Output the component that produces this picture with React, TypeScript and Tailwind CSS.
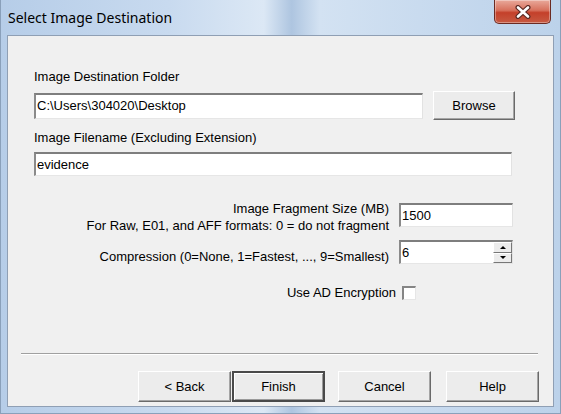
const ui = '"Liberation Sans", Arial, sans-serif'

function Field({ value, className = '' }: { value?: string; className?: string }) {
  return (
    <div
      className={`bg-white border-t-2 border-l-2 border-b border-r border-t-[#7e7e7e] border-l-[#8a8a8a] border-b-[#e6e6e6] border-r-[#e2e2e2] pl-[1px] flex items-center text-[13px] leading-[16px] text-black ${className}`}
    >
      {value}
    </div>
  )
}

function Button({ label, primary = false, className = '' }: { label: string; primary?: boolean; className?: string }) {
  return (
    <div
      className={`h-[31px] w-[93px] flex items-center justify-center text-[13px] text-black bg-[#ececec] ${
        primary
          ? 'border-2 border-[#4a4a4a] shadow-[inset_1px_1px_0_#ffffff,inset_-1px_-1px_0_#9a9a9a]'
          : 'border border-t-white border-l-white border-b-[#6a6a6a] border-r-[#6a6a6a] shadow-[inset_-1px_-1px_0_#a5a5a5]'
      } ${className}`}
    >
      {label}
    </div>
  )
}

export default function App() {
  return (
    <div
      className="w-[561px] h-[414px] flex flex-col overflow-hidden border-l border-r border-b border-[#8aa0ba] bg-[linear-gradient(90deg,#b6cde8_0%,#c8daef_30%,#dce8f5_47%,#aec5e0_52%,#d3e2f2_57%,#c6d9ee_80%,#bcd2ea_100%)]"
      style={{ fontFamily: ui }}
    >
      {/* Title bar */}
      <div className="h-[35px] shrink-0 flex items-start justify-between pl-[7px] pr-[9px]">
        <div
          className="pt-[8px] text-[14px] leading-[20px] text-black"
          style={{ fontFamily: '"Noto Sans", "Open Sans", sans-serif' }}
        >
          Select Image Destination
        </div>
        <div className="w-[57px] h-[24px] rounded-b-[5px] border border-t-0 border-[#6b2a22] bg-[linear-gradient(180deg,#e9a99b_0%,#d7705c_45%,#c4402a_55%,#c75a42_100%)] shadow-[inset_0_0_0_1px_rgba(255,255,255,0.35)] flex items-center justify-center">
          <svg width="18" height="14" viewBox="0 0 18 14">
            <path d="M4 2.5 L14 11.5 M14 2.5 L4 11.5" stroke="#5b2a24" strokeWidth="5" strokeLinecap="round" />
            <path d="M4 2.5 L14 11.5 M14 2.5 L4 11.5" stroke="#ffffff" strokeWidth="2.6" strokeLinecap="round" />
          </svg>
        </div>
      </div>

      {/* Client area */}
      <div className="mx-[6px] h-[372px] shrink-0 bg-[#f0f0f0] border border-[#8f9fb4] flex flex-col text-black">
        <div className="pl-[26px] mt-[33px] text-[13px] leading-[16px]">Image Destination Folder</div>
        <div className="pl-[26px] mt-[6px] h-[29px] flex items-center">
          <Field value="C:\Users\304020\Desktop" className="w-[389px] h-[26px]" />
          <Button label="Browse" className="ml-[10px] !w-[82px] !h-[29px]" />
        </div>
        <div className="pl-[26px] mt-[10px] text-[13px] leading-[16px]">Image Filename (Excluding Extension)</div>
        <div className="pl-[26px] mt-[6px]">
          <Field value="evidence" className="w-[478px] h-[24px]" />
        </div>

        <div className="mt-[24px] flex justify-end pr-[40px]">
          <div className="text-right text-[13px] leading-[17px]">
            <div>Image Fragment Size (MB)</div>
            <div>For Raw, E01, and AFF formats: 0 = do not fragment</div>
          </div>
          <Field value="1500" className="ml-[10px] mt-[3px] w-[114px] h-[24px]" />
        </div>

        <div className="mt-[6px] flex justify-end pr-[40px]">
          <div className="mt-[9px] text-[13px] leading-[16px]">Compression (0=None, 1=Fastest, ..., 9=Smallest)</div>
          <div className="ml-[10px] w-[114px] h-[24px] relative">
            <Field value="6" className="w-full h-full" />
            <div className="absolute right-[1px] top-[2px] bottom-[1px] w-[19px] flex flex-col">
              {['M2 5 L5 2 L8 5 Z', 'M2 2 L5 5 L8 2 Z'].map((d, i) => (
                <div
                  key={i}
                  className="flex-1 bg-[#ececec] border border-t-white border-l-white border-b-[#777] border-r-[#777] flex items-center justify-center"
                >
                  <svg width="10" height="7" viewBox="0 0 10 7">
                    <path d={d} fill="#000" />
                  </svg>
                </div>
              ))}
            </div>
          </div>
        </div>

        <div className="mt-[20px] flex justify-end items-center pr-[137px]">
          <div className="text-[13px] leading-[16px]">Use AD Encryption</div>
          <div className="ml-[6px] w-[14px] h-[14px] bg-white border-t-2 border-l-2 border-b border-r border-t-[#858585] border-l-[#858585] border-b-[#e6e6e6] border-r-[#e6e6e6]" />
        </div>

        <div className="mt-[52px] mx-[13px] mr-[15px] h-[2px] border-t border-t-[#a0a0a0] border-b border-b-white" />

        <div className="mt-[16px] flex justify-end pr-[14px]">
          <Button label="< Back" />
          <Button label="Finish" primary className="ml-[1px]" />
          <Button label="Cancel" className="ml-[13px]" />
          <Button label="Help" className="ml-[15px]" />
        </div>
      </div>
    </div>
  )
}
